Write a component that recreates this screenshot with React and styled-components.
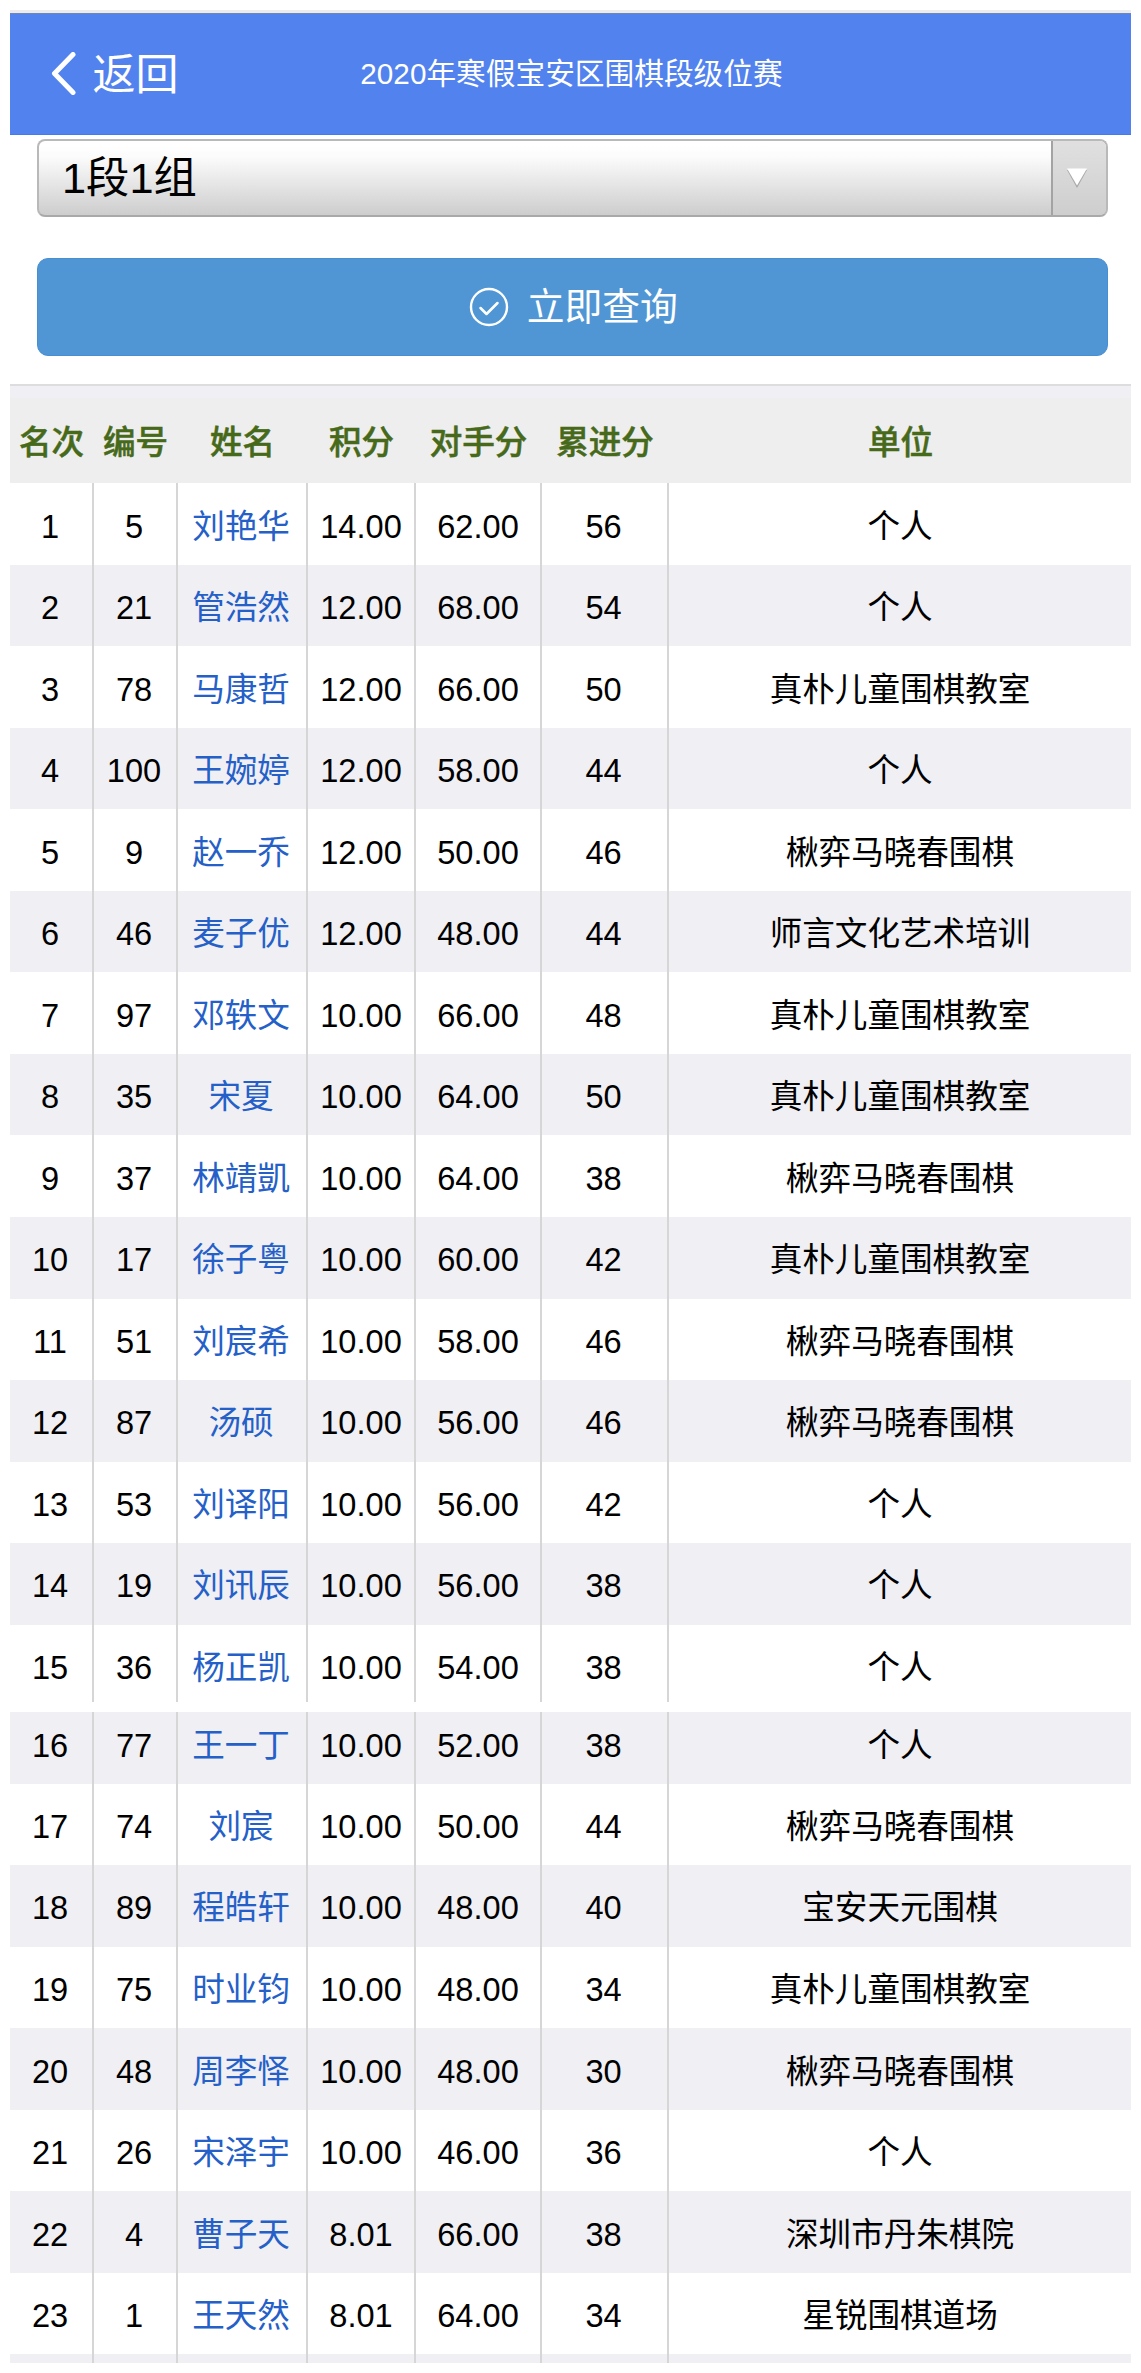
import React from "react";
import styled, { createGlobalStyle } from "styled-components";

const GlobalStyle = createGlobalStyle`
  *, *::before, *::after { box-sizing: border-box; }
  body {
    margin: 0;
    background: #fff;
    font-family: "Liberation Sans", "Noto Sans CJK SC", sans-serif;
    color: #000;
  }
`;

const Page = styled.main`
  width: 1141px;
  height: 2373px;
  padding: 10px 10px 0;
  background: #fff;
`;

const StatusEdge = styled.div`
  height: 3px;
  background: #ececec;
`;

const TopBar = styled.header`
  display: grid;
  grid-template-columns: 300px 1fr 300px;
  align-items: center;
  height: 122.4px;
  background: #5282ee;
  border-top: 1px solid #6f86b8;
  border-bottom: 1px solid #447aee;
  color: #fff;
`;

const BackButton = styled.button`
  display: flex;
  align-items: center;
  gap: 16.5px;
  padding: 1px 0 0 41px;
  border: 0;
  background: none;
  color: inherit;
  font: inherit;
  font-size: 43px;
  line-height: 60px;
`;

const BackIcon = styled.svg`
  margin-bottom: 2px;
`;

const Title = styled.h1`
  margin: 0;
  padding: 0 0 0 2px;
  font-size: 29.7px;
  font-weight: 400;
  line-height: 40px;
  text-align: center;
  white-space: nowrap;
`;

const Form = styled.section`
  padding: 3.2px 23.5px 0 27px;
`;

const Select = styled.div`
  display: flex;
  height: 78px;
  border: 2px solid #b9b9b9;
  border-bottom-color: #a9a9a9;
  border-radius: 8px;
  background: linear-gradient(#fff 6%, #fbfbfb 22%, #cdcdcd 100%);
  overflow: hidden;
`;

const SelectValue = styled.span`
  flex: 1;
  padding: 5px 0 0 23px;
  font-size: 43.3px;
  line-height: 64px;
`;

const SelectArrow = styled.span`
  display: flex;
  align-items: center;
  justify-content: center;
  width: 55px;
  padding: 0 5px 0 0;
  border-left: 2px solid #a3a3a3;
  background: linear-gradient(#e0e0e0, #cecece);
`;

const QueryButton = styled.button`
  display: flex;
  align-items: center;
  justify-content: center;
  gap: 18px;
  width: 100%;
  height: 98px;
  margin-top: 41px;
  padding: 0 0 0 2px;
  border: 1px solid #478fd3;
  border-radius: 11px;
  background: #5096d5;
  color: #fff;
  font: inherit;
  font-size: 37.8px;
  line-height: 60px;
`;

const Table = styled.div`
  margin-top: 28.4px;
  height: 1979px;
  border-top: 2px solid #dddddf;
  overflow: hidden;
`;

const Row = styled.div`
  display: grid;
  grid-template-columns: 84px 84px 130px 108px 126px 127px 1fr;
  height: ${(p) => p.$height || 81.53}px;
  background: ${(p) => (p.$striped ? "#efeff4" : "#fff")};
  overflow: hidden;
`;

const HeadRow = styled(Row)`
  height: 97.4px;
  background: linear-gradient(#efeff4 12px, #eee 12px);
`;

const Cell = styled.div`
  padding: ${(p) => p.$top ?? 20.3}px ${(p) => (p.$decimal ? 0 : 2)}px 0 0;
  border-right: 2px solid #d6d6d6;
  color: ${(p) => (p.$link ? "#2460c8" : "#000")};
  font-size: 32.6px;
  line-height: 46px;
  text-align: center;
  white-space: nowrap;
  &:last-child { border-right: 0; padding-right: 0; }
`;

const HeadCell = styled(Cell)`
  padding: 34px 0 0 1px;
  border-right-color: transparent;
  color: #46691a;
  font-weight: 500;
  -webkit-text-stroke: 0.5px currentColor;
`;

const Seam = styled.div`
  height: 10px;
  background: #fff;
`;

const HEADINGS = ["名次", "编号", "姓名", "积分", "对手分", "累进分", "单位"];

const RESULTS = [
  [1, 5, "刘艳华", "14.00", "62.00", 56, "个人"],
  [2, 21, "管浩然", "12.00", "68.00", 54, "个人"],
  [3, 78, "马康哲", "12.00", "66.00", 50, "真朴儿童围棋教室"],
  [4, 100, "王婉婷", "12.00", "58.00", 44, "个人"],
  [5, 9, "赵一乔", "12.00", "50.00", 46, "楸弈马晓春围棋"],
  [6, 46, "麦子优", "12.00", "48.00", 44, "师言文化艺术培训"],
  [7, 97, "邓轶文", "10.00", "66.00", 48, "真朴儿童围棋教室"],
  [8, 35, "宋夏", "10.00", "64.00", 50, "真朴儿童围棋教室"],
  [9, 37, "林靖凱", "10.00", "64.00", 38, "楸弈马晓春围棋"],
  [10, 17, "徐子粤", "10.00", "60.00", 42, "真朴儿童围棋教室"],
  [11, 51, "刘宸希", "10.00", "58.00", 46, "楸弈马晓春围棋"],
  [12, 87, "汤硕", "10.00", "56.00", 46, "楸弈马晓春围棋"],
  [13, 53, "刘译阳", "10.00", "56.00", 42, "个人"],
  [14, 19, "刘讯辰", "10.00", "56.00", 38, "个人"],
  [15, 36, "杨正凯", "10.00", "54.00", 38, "个人"],
  [16, 77, "王一丁", "10.00", "52.00", 38, "个人"],
  [17, 74, "刘宸", "10.00", "50.00", 44, "楸弈马晓春围棋"],
  [18, 89, "程皓轩", "10.00", "48.00", 40, "宝安天元围棋"],
  [19, 75, "时业钧", "10.00", "48.00", 34, "真朴儿童围棋教室"],
  [20, 48, "周李怿", "10.00", "48.00", 30, "楸弈马晓春围棋"],
  [21, 26, "宋泽宇", "10.00", "46.00", 36, "个人"],
  [22, 4, "曹子天", "8.01", "66.00", 38, "深圳市丹朱棋院"],
  [23, 1, "王天然", "8.01", "64.00", 34, "星锐围棋道场"],
];

// The list is shown in two segments; the rows at the seam are shorter.
const SEAM_AFTER = 15;
const rowHeight = (rank) => (rank === SEAM_AFTER ? 77.3 : rank === SEAM_AFTER + 1 ? 71.8 : undefined);
const cellTop = (rank) => (rank === SEAM_AFTER + 1 ? 11.2 : undefined);

function ResultRow({ values }) {
  const rank = values[0];
  return (
    <Row $striped={rank % 2 === 0} $height={rowHeight(rank)}>
      {values.map((value, i) => (
        <Cell key={i} $link={i === 2} $decimal={i === 3 || i === 4} $top={cellTop(rank)}>
          {value}
        </Cell>
      ))}
    </Row>
  );
}

export default function App() {
  return (
    <>
      <GlobalStyle />
      <Page>
        <StatusEdge />
        <TopBar>
          <BackButton>
            <BackIcon width="25" height="43" viewBox="0 0 25 43" fill="none">
              <path d="M22 2.5 3.5 21.5 22 40.5" stroke="#fff" strokeWidth="5" strokeLinecap="round" strokeLinejoin="round" />
            </BackIcon>
            返回
          </BackButton>
          <Title>2020年寒假宝安区围棋段级位赛</Title>
        </TopBar>
        <Form>
          <Select>
            <SelectValue>1段1组</SelectValue>
            <SelectArrow>
              <svg width="20" height="20" viewBox="0 0 20 20">
                <path d="M0 2H20L10 20Z" fill="#a8a8a8" />
                <path d="M0 0.5H20L10 17.5Z" fill="#fff" />
              </svg>
            </SelectArrow>
          </Select>
          <QueryButton>
            <svg width="40" height="40" viewBox="0 0 40 40" fill="none" stroke="#fff" strokeLinecap="round" strokeLinejoin="round">
              <circle cx="20" cy="20" r="18" strokeWidth="2.4" />
              <path d="M11.5 21 17.5 27 28.5 16" strokeWidth="2.5" />
            </svg>
            立即查询
          </QueryButton>
        </Form>
        <Table>
          <HeadRow>
            {HEADINGS.map((heading) => (
              <HeadCell key={heading}>{heading}</HeadCell>
            ))}
          </HeadRow>
          {RESULTS.map((values) => (
            <React.Fragment key={values[0]}>
              <ResultRow values={values} />
              {values[0] === SEAM_AFTER && <Seam />}
            </React.Fragment>
          ))}
          <Row $striped $height={12}>
            {HEADINGS.map((heading) => (
              <Cell key={heading} />
            ))}
          </Row>
        </Table>
      </Page>
    </>
  );
}
